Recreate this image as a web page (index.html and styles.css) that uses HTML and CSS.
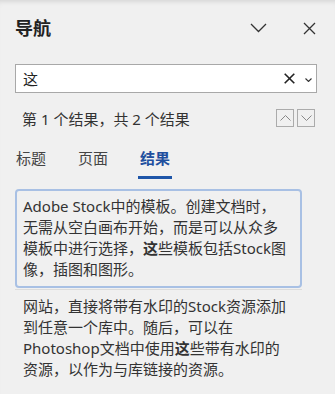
FILE: index.html
```html
<!DOCTYPE html>
<html lang="zh-CN">
<head>
    <meta charset="UTF-8">
    <meta name="viewport" content="width=device-width, initial-scale=1.0">
    <title>导航</title>
    <link rel="stylesheet" href="styles.css">
</head>
<body>
    <div class="pane">
        <!-- Pane header -->
        <div class="pane-header">
            <h1>导航</h1>
            <div class="header-icons">
                <button class="icon-btn chevron-btn" aria-label="选项">
                    <svg width="17" height="10" viewBox="0 0 17 10"><path d="M1 1L8.5 8.5L16 1" fill="none" stroke="#333" stroke-width="1.3"/></svg>
                </button>
                <button class="icon-btn close-btn" aria-label="关闭">
                    <svg width="13" height="13" viewBox="0 0 13 13"><path d="M1 1L12 12M12 1L1 12" fill="none" stroke="#333" stroke-width="1.3"/></svg>
                </button>
            </div>
        </div>

        <!-- Search box -->
        <div class="search-box">
            <span class="search-text">这</span>
            <svg class="clear-icon" width="11" height="11" viewBox="0 0 11 11"><path d="M.7.7L10.3 10.3M10.3.7L.7 10.3" fill="none" stroke="#222" stroke-width="1.6"/></svg>
            <svg class="drop-icon" width="7" height="4" viewBox="0 0 7 4"><path d="M.5.5L3.5 3.5L6.5.5" fill="none" stroke="#333" stroke-width="1.1"/></svg>
        </div>

        <div class="status-row">
            <span>第 1 个结果，共 2 个结果</span>
            <div class="nav-btns">
                <button class="nav-btn" aria-label="上一个">
                    <svg width="11" height="6" viewBox="0 0 11 6"><path d="M.5 5.5L5.5.5L10.5 5.5" fill="none" stroke="#888" stroke-width="1"/></svg>
                </button>
                <button class="nav-btn" aria-label="下一个">
                    <svg width="11" height="6" viewBox="0 0 11 6"><path d="M.5.5L5.5 5.5L10.5.5" fill="none" stroke="#888" stroke-width="1"/></svg>
                </button>
            </div>
        </div>

        <!-- Tabs -->
        <div class="tabs">
            <span class="tab">标题</span>
            <span class="tab">页面</span>
            <span class="tab active">结果</span>
        </div>

        <div class="results">
            <div class="result selected">
                Adobe Stock中的模板。创建文档时，<br>
                无需从空白画布开始，而是可以从众多<br>
                模板中进行选择，<b>这</b>些模板包括Stock图<br>
                像，插图和图形。
            </div>
            <div class="result">
                网站，直接将带有水印的Stock资源添加<br>
                到任意一个库中。随后，可以在<br>
                Photoshop文档中使用<b>这</b>些带有水印的<br>
                资源，以作为与库链接的资源。
            </div>
        </div>
    </div>
</body>
</html>
```

FILE: styles.css
```css
body {
    margin: 0;
    padding: 0;
    background: #f0f0f0;
    box-shadow: inset 0 5px 6px -5px rgba(0, 0, 0, 0.18);
    min-height: 394px;
    font-family: "Noto Sans", "Noto Sans CJK SC", sans-serif;
    color: #333;
}

.pane {
    padding: 0 18px 0 15px;
}

/* Header */
.pane-header {
    display: flex;
    align-items: center;
    height: 56px;
}

.pane-header h1 {
    margin: 0;
    font-size: 18px;
    font-weight: bold;
    color: #222;
    line-height: 24px;
}

.header-icons {
    display: flex;
    align-items: center;
    gap: 36px;
    margin-left: auto;
    margin-right: 1px;
}

.icon-btn {
    background: none;
    border: none;
    padding: 0;
    display: flex;
    cursor: pointer;
}

/* Search */
.search-box {
    margin-top: 8px;
    height: 29px;
    box-sizing: border-box;
    border: 1px solid #a8a8a8;
    background: #fff;
    display: flex;
    align-items: center;
    padding: 0 4px 0 7px;
}

.search-text {
    font-size: 15px;
    color: #222;
    flex: 1;
}

.clear-icon {
    margin-right: 10px;
}

.drop-icon {
    margin-top: 2px;
}

.status-row {
    margin-top: 16px;
    height: 18px;
    display: flex;
    align-items: center;
    justify-content: space-between;
    font-size: 15px;
    padding-left: 7px;
    color: #333;
}

.nav-btns {
    display: flex;
    gap: 3px;
    margin-right: 2px;
}

.nav-btn {
    width: 18px;
    height: 18px;
    padding: 0;
    border: 1px solid #ababab;
    background: #f0f0f0;
    display: flex;
    align-items: center;
    justify-content: center;
}

/* Tabs */
.tabs {
    display: flex;
    gap: 28px;
    margin-top: 21px;
    margin-left: -1px;
}

.tab {
    font-size: 15px;
    line-height: 21px;
    padding: 0 2px 7px;
    border-bottom: 3px solid transparent;
    color: #444;
}

.tab.active {
    color: #1f4f9e;
    font-weight: bold;
    border-bottom-color: #1e55a8;
}

/* Results */
.results {
    margin-top: 10px;
    margin-right: 15px;
}

.result {
    font-size: 15px;
    line-height: 21px;
    color: #333;
    padding: 0 8px;
}

.result b {
    font-weight: bold;
}

.result.selected {
    border: 2px solid #a8c0e4;
    border-radius: 4px;
    padding: 5px 6px 6px;
    margin-bottom: 1px;
}

.result.selected + .result {
    border-top: 1px solid #dcdcdc;
    padding-top: 6px;
}
```
